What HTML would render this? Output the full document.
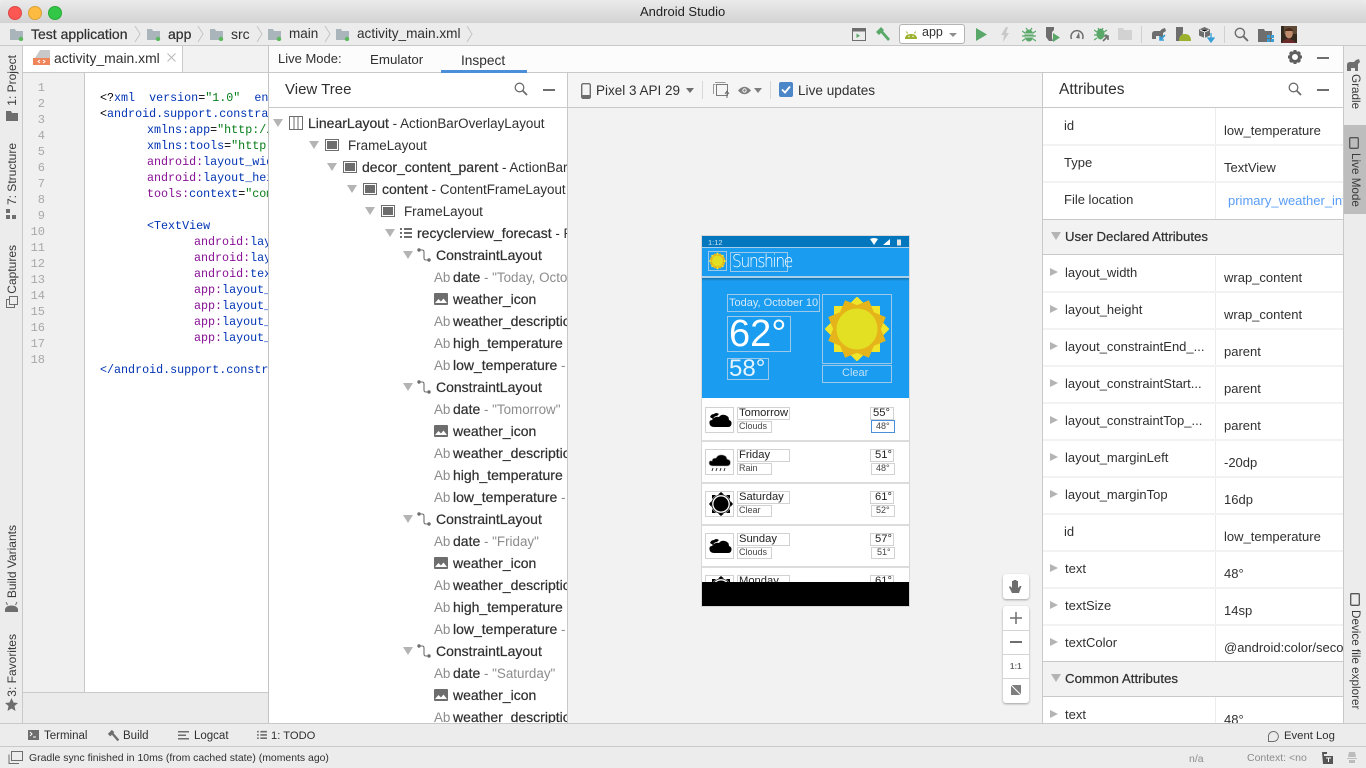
<!DOCTYPE html>
<html><head><meta charset="utf-8"><title>Android Studio</title>
<style>
html,body{margin:0;padding:0;width:1366px;height:768px;overflow:hidden;background:#ececec}
body{position:relative;font-family:"Liberation Sans",sans-serif;font-size:13px;color:#303030}
div,span,svg{position:absolute}
.t{position:absolute;white-space:nowrap;line-height:16px;margin-top:1px}
.t.ph{margin-top:0}
.t.m2{margin-top:2px}
.m{-webkit-text-stroke:.22px currentColor;font-size:14px}
.g{color:#8c8c8c}
.tree{font-size:13.4px}
.tree .t.m,.tree .t:has(.m){margin-top:0}
.ad{width:0;height:0;border-left:5px solid transparent;border-right:5px solid transparent;border-top:8px solid #b4b4b4}
.ar{width:0;height:0;border-top:4.5px solid transparent;border-bottom:4.5px solid transparent;border-left:8px solid #b4b4b4}
.vl{writing-mode:vertical-rl;transform:rotate(180deg);white-space:nowrap;font-size:12px;line-height:16px;color:#3a3a3a}
.vr{writing-mode:vertical-rl;white-space:nowrap;font-size:11.7px;line-height:16px;color:#3a3a3a}
.code{font-family:"Liberation Mono",monospace;font-size:11.7px;white-space:pre;position:absolute;line-height:16px;color:#000;margin-top:1px}
.n{font-family:"Liberation Mono",monospace;font-size:12px;color:#a8a8a8;position:absolute;left:24px;width:21px;text-align:right;line-height:16px;margin-top:1px}
.b{color:#0033b3}.gr{color:#067d17}.p{color:#871094}
.hl{position:absolute;background:#c9c9c9;height:1px}
.vlg{position:absolute;background:#c9c9c9;width:1px}
.gap{position:absolute;left:1043px;width:300px;height:2px;background:#f2f2f2}
.box{position:absolute;box-sizing:border-box;border:1px solid #d2d2d2;overflow:visible}
.hb{position:absolute;box-sizing:border-box;border:1px solid #9cc9ea}
.tip{font-size:11.2px;line-height:12px;color:#222;position:absolute;white-space:nowrap}
.tis{font-size:9px;line-height:11px;color:#444;position:absolute;white-space:nowrap}
.zb{position:absolute;left:1003px;width:26px;background:#fff;border-radius:3px;box-shadow:0 1px 2px rgba(0,0,0,.35)}
</style></head><body>
<svg width="0" height="0" style="position:absolute"><defs>
<symbol id="fold" viewBox="0 0 14 13"><path d="M0 1h5l1 2h7v9H0z" fill="#a9b4bb"/><circle cx="11" cy="11" r="2.2" fill="#5cb85c"/></symbol>
<symbol id="fr" viewBox="0 0 14 12"><rect x=".5" y=".5" width="13" height="11" fill="none" stroke="#6d6d6d"/><rect x="2" y="2" width="10" height="8" fill="#6d6d6d"/></symbol>
<symbol id="li" viewBox="0 0 14 14"><rect x=".5" y=".5" width="13" height="13" fill="none" stroke="#6d6d6d"/><path d="M5 0v14M9 0v14" stroke="#6d6d6d"/></symbol>
<symbol id="lst" viewBox="0 0 12 11"><path d="M0 1h2v2H0zM0 5h2v2H0zM0 9h2v2H0zM4 1h8v2H4zM4 5h8v2H4zM4 9h8v2H4z" fill="#6d6d6d"/></symbol>
<symbol id="con" viewBox="0 0 14 14"><circle cx="2" cy="2" r="1.7" fill="#6d6d6d"/><circle cx="12" cy="12" r="1.7" fill="#6d6d6d"/><path d="M3 2h2q2 0 2 2v6q0 2 2 2h2" fill="none" stroke="#6d6d6d" stroke-width="1.1"/></symbol>
<symbol id="img" viewBox="0 0 14 12"><rect width="14" height="12" rx="1" fill="#6d6d6d"/><path d="M1 10l3.5-4 2.5 2.5 2.5-3 3.500 4.500z" fill="#fff"/></symbol>
<symbol id="sr" viewBox="0 0 14 14"><circle cx="5.500" cy="5.500" r="4.300" fill="none" stroke="#6d6d6d" stroke-width="1.300"/><path d="M8.800 8.800l4.200 4.200" stroke="#6d6d6d" stroke-width="1.800"/></symbol>
<symbol id="sun" viewBox="-32 -32 64 64"><g fill="#efe52a"><rect x="-23" y="-23" width="46" height="46"/><rect x="-23" y="-23" width="46" height="46" transform="rotate(45)"/></g><g fill="#e5b41a"><rect x="-22" y="-22" width="44" height="44" transform="rotate(22.500)"/><rect x="-22" y="-22" width="44" height="44" transform="rotate(67.500)"/></g><circle r="20.500" fill="#e3e024"/></symbol>
<symbol id="cloud" viewBox="0 0 26 24"><path d="M5 12q3-4 7-3 2-3 6-2 4 1 4 5 3 1 2.500 4t-3.500 3H7q-4 0-4.500-3.500T5 12z" fill="#000"/><path d="M3 9q1-3 4-3 2-2 5 0l-2 2q-3 0-4 3z" fill="#000"/></symbol>
<symbol id="rain" viewBox="0 0 26 24"><path d="M5 11q0-3 4-3 2-4 7-3 4 1 4 4 4 1 3.500 4t-3.500 3H6q-4 0-4-3t3-2z" fill="#000" stroke="#bbb" stroke-width=".6"/><path d="M6 18l-1 3M10 18l-1 3M14 18l-1 3M18 18l-1 3" stroke="#333" stroke-width="1"/></symbol>
<symbol id="csun" viewBox="-13 -12 26 24"><circle r="7.500" fill="#000"/><circle r="9.200" fill="none" stroke="#000" stroke-width=".7"/><path d="M-3-9.500L0-12 3-9.500zM-3 9.500L0 12 3 9.500zM-9.500-3L-12 0-9.500 3zM9.500-3L12 0 9.500 3zM-9-5L-9-9-5-9zM9-5L9-9 5-9zM-9 5L-9 9-5 9zM9 5L9 9 5 9z" fill="#000"/></symbol>
<symbol id="ham" viewBox="0 0 16 16"><path d="M1 6L6 1l3 3-1 1 7 8-2 2-7-8-2 2z" fill="currentColor"/></symbol>
</defs></svg>

<!-- title bar -->
<div style="left:0;top:0;width:1366px;height:23px;background:linear-gradient(#ebebeb,#d2d2d2);border-radius:5px 5px 0 0"></div>
<div style="left:8px;top:6px;width:12px;height:12px;border-radius:50%;background:#fc5753;border:.5px solid #df4744"></div>
<div style="left:28px;top:6px;width:12px;height:12px;border-radius:50%;background:#fdbc40;border:.5px solid #de9f34"></div>
<div style="left:48px;top:6px;width:12px;height:12px;border-radius:50%;background:#33c748;border:.5px solid #27aa35"></div>
<span class="t ph" style="left:640px;top:4px;color:#222">Android Studio</span>

<!-- breadcrumb toolbar -->
<div class="hl" style="left:0;top:45px;width:1366px"></div>
<svg style="left:10px;top:28px" width="14" height="13"><use href="#fold"/></svg>
<span class="t m" style="left:31px;top:25px">Test application</span>
<svg style="left:134px;top:25px" width="8" height="18"><path d="M1 1l5 8-5 8" fill="none" stroke="#c4c4c4"/></svg>
<svg style="left:147px;top:28px" width="14" height="13"><use href="#fold"/></svg>
<span class="t m" style="left:168px;top:25px">app</span>
<svg style="left:197px;top:25px" width="8" height="18"><path d="M1 1l5 8-5 8" fill="none" stroke="#c4c4c4"/></svg>
<svg style="left:210px;top:28px" width="14" height="13"><use href="#fold"/></svg>
<span class="t" style="left:231px;top:25px;font-size:14px">src</span>
<svg style="left:256px;top:25px" width="8" height="18"><path d="M1 1l5 8-5 8" fill="none" stroke="#c4c4c4"/></svg>
<svg style="left:268px;top:28px" width="14" height="13"><use href="#fold"/></svg>
<span class="t" style="left:289px;top:25px;font-size:13.500px">main</span>
<svg style="left:324px;top:25px" width="8" height="18"><path d="M1 1l5 8-5 8" fill="none" stroke="#c4c4c4"/></svg>
<svg style="left:336px;top:28px" width="14" height="13"><use href="#fold"/></svg>
<span class="t" style="left:357px;top:25px;font-size:13.600px">activity_main.xml</span>
<svg style="left:466px;top:25px" width="8" height="18"><path d="M1 1l5 8-5 8" fill="none" stroke="#c4c4c4"/></svg>

<!-- top right toolbar icons -->
<svg style="left:852px;top:28px" width="14" height="13"><rect x=".5" y=".5" width="13" height="12" fill="none" stroke="#6e6e6e"/><rect x="1" y="1" width="12" height="2.500" fill="#6e6e6e"/><path d="M4.500 5.500v4.500l3.500-2.200z" fill="#59a869"/></svg>
<svg style="left:875px;top:26px;color:#59a869" width="16" height="16"><use href="#ham"/></svg>
<div style="left:899px;top:24px;width:66px;height:20px;box-sizing:border-box;background:#fff;border:1px solid #b4b4b4;border-radius:3px"></div>
<svg style="left:905px;top:29px" width="12" height="10"><path d="M0 10q0-5 6-5t6 5z" fill="#9bb02c"/><path d="M2.500 4.500L1.500 2.500M9.500 4.500l1-2" stroke="#9bb02c"/><circle cx="4" cy="7.500" r=".7" fill="#fff"/><circle cx="8" cy="7.500" r=".7" fill="#fff"/></svg>
<span class="t ph" style="left:922px;top:24px;font-size:12.500px">app</span>
<div style="left:949px;top:33px;width:0;height:0;border-left:4px solid transparent;border-right:4px solid transparent;border-top:4px solid #8e8e8e"></div>
<svg style="left:976px;top:28px" width="12" height="13"><path d="M0 0l11 6.500L0 13z" fill="#59a869"/></svg>
<svg style="left:1000px;top:27px" width="10" height="15"><path d="M6 0L1 8h3l-1 7 6-9H6l2-6z" fill="#c8c8c8"/></svg>
<svg style="left:1022px;top:27px" width="14" height="15"><ellipse cx="7" cy="8.500" rx="4.500" ry="6" fill="#59a869"/><path d="M0 4l3 2M14 4l-3 2M0 9h3M14 9h-3M0 14l3-2M14 14l-3-2M4 1l1.500 2M10 1L8.500 3" stroke="#59a869" stroke-width="1.200"/><path d="M3 7h8M3 10h8" stroke="#ececec"/></svg>
<svg style="left:1046px;top:27px" width="15" height="16"><path d="M0 0h8v3l-2 2v6l1 3H3L0 10z" fill="#6e6e6e"/><path d="M7 6l7 4.500-7 4.500z" fill="#59a869"/></svg>
<svg style="left:1070px;top:28px" width="14" height="12"><path d="M1.500 11a6 6 0 1 1 11 0" fill="none" stroke="#6e6e6e" stroke-width="1.500"/><path d="M6 10l3-6 .8 6.500z" fill="#6e6e6e"/></svg>
<svg style="left:1094px;top:27px" width="16" height="15"><ellipse cx="6.500" cy="7" rx="4" ry="5.500" fill="#59a869"/><path d="M0 3l3 2M13 3l-3 2M0 8h3M13 8h-2M0 13l3-2M4 1l1 2M9 1L8 3" stroke="#59a869" stroke-width="1.200"/><path d="M9 14l5-5M10 9h4v4" fill="none" stroke="#6e6e6e" stroke-width="1.600"/></svg>
<svg style="left:1118px;top:28px" width="14" height="12"><path d="M0 0h5l1 2h8v10H0z" fill="#d2d2d2"/></svg>
<div style="left:1141px;top:26px;width:1px;height:17px;background:#d0d0d0"></div>
<svg style="left:1152px;top:26px" width="15" height="16"><path d="M0 13V8q0-3 3-3h5l2-2 3-1 1 3-3 2v6H8v-3H4v3z" fill="#6e6e6e"/><path d="M8 15l5-5M9 10h4v4" fill="none" stroke="#389fd6" stroke-width="1.600" transform="rotate(180 10.500 12)"/></svg>
<svg style="left:1176px;top:27px" width="15" height="15"><path d="M0 0h7v4L6 14H0z" fill="#6e6e6e"/><path d="M3 14q0-7 6-7t6 7z" fill="#9bb02c"/></svg>
<svg style="left:1199px;top:27px" width="16" height="16"><path d="M5.500 0L11 2.500v6L5.500 11 0 8.500v-6z" fill="#6e6e6e"/><path d="M1 3l4.500 2L10 3M5.500 5v6" stroke="#ececec"/><path d="M12 6v8M9 11l3 4 3-4z" stroke="#389fd6" fill="#389fd6" stroke-width="1.300"/></svg>
<div style="left:1224px;top:26px;width:1px;height:17px;background:#d0d0d0"></div>
<svg style="left:1234px;top:27px" width="15" height="15"><use href="#sr"/></svg>
<svg style="left:1258px;top:29px" width="16" height="13"><path d="M0 0h6l1 2h7v11H0z" fill="#6e6e6e"/><rect x="9" y="6" width="3" height="3" fill="#389fd6"/><rect x="13" y="6" width="3" height="3" fill="#389fd6"/><rect x="9" y="10" width="3" height="3" fill="#389fd6"/><rect x="13" y="10" width="3" height="3" fill="#389fd6"/></svg>
<svg style="left:1281px;top:26px" width="16" height="17"><rect width="16" height="17" fill="#33291f"/><rect x="3" y="0" width="13" height="8" fill="#5e4836"/><ellipse cx="8" cy="7.500" rx="3.800" ry="5" fill="#c08a6c"/><path d="M4 4q4-4 8 0v1H4z" fill="#4a2a1a"/><path d="M1 17q2-5 7-4t7 4z" fill="#6b2a2a"/></svg>

<!-- left strip -->
<div class="vlg" style="left:22px;top:46px;height:677px"></div>
<span class="vl" style="left:4px;top:55px">1: Project</span>
<svg style="left:6px;top:111px" width="12" height="10"><path d="M0 0h5l1 2h6v8H0z" fill="#6e6e6e"/></svg>
<span class="vl" style="left:4px;top:143px">7: Structure</span>
<svg style="left:6px;top:209px" width="12" height="12"><path d="M0 0h4v4H0zM0 6h4v4H0zM6 6h4v4H6z" fill="#6e6e6e"/></svg>
<span class="vl" style="left:4px;top:245px">Captures</span>
<svg style="left:6px;top:296px" width="12" height="12"><rect x=".5" y="3.500" width="8" height="8" fill="none" stroke="#6e6e6e"/><rect x="3.500" y=".5" width="8" height="8" fill="#ececec" stroke="#6e6e6e"/></svg>
<span class="vl" style="left:4px;top:525px">Build Variants</span>
<svg style="left:5px;top:602px" width="13" height="10"><path d="M0 10q0-6 6.500-6T13 10zM2.500 3L1 0M10.500 3L12 0" fill="#6e6e6e" stroke="#6e6e6e"/></svg>
<span class="vl" style="left:4px;top:634px">3: Favorites</span>
<svg style="left:5px;top:698px" width="13" height="13"><path d="M6.500 0l2 4.500 4.500.5-3.500 3 1 5-4-2.500-4 2.500 1-5L0 5l4.500-.5z" fill="#6e6e6e"/></svg>

<!-- editor -->
<div style="left:23px;top:46px;width:245px;height:26px;background:#f2f2f2"></div>
<div style="left:23px;top:46px;width:159px;height:26px;background:#fff"></div>
<div class="vlg" style="left:182px;top:46px;height:26px"></div>
<div class="hl" style="left:23px;top:72px;width:245px"></div>
<svg style="left:33px;top:50px" width="18" height="15"><path d="M7 0h10v8H2z" fill="#c8c8c8"/><rect y="8" width="17" height="7" fill="#f0855a"/><path d="M7 10l-2 1.500L7 13M10 10l2 1.500L10 13" fill="none" stroke="#fff"/></svg>
<span class="t ph" style="left:54px;top:50px;font-size:13.900px">activity_main.xml</span>
<svg style="left:167px;top:53px" width="9" height="9"><path d="M.5.5l8 8M8.500.5l-8 8" stroke="#b8b8b8"/></svg>
<div style="left:23px;top:73px;width:61px;height:619px;background:#f0f0f0"></div>
<div class="vlg" style="left:84px;top:73px;height:619px"></div>
<div style="left:85px;top:73px;width:183px;height:619px;background:#fff"></div>
<div style="left:23px;top:692px;width:245px;height:1px;background:#c9c9c9"></div>
<div style="left:23px;top:693px;width:245px;height:30px;background:#ebebeb"></div>
<span class="n" style="top:79px">1</span><span class="n" style="top:95px">2</span><span class="n" style="top:111px">3</span><span class="n" style="top:127px">4</span><span class="n" style="top:143px">5</span><span class="n" style="top:159px">6</span><span class="n" style="top:175px">7</span><span class="n" style="top:191px">8</span><span class="n" style="top:207px">9</span><span class="n" style="top:223px">10</span><span class="n" style="top:239px">11</span><span class="n" style="top:255px">12</span><span class="n" style="top:271px">13</span><span class="n" style="top:287px">14</span><span class="n" style="top:303px">15</span><span class="n" style="top:319px">16</span><span class="n" style="top:335px">17</span><span class="n" style="top:351px">18</span>
<span class="code" style="left:100px;top:89px">&lt;?<span class="b" style="position:static">xml  version</span>=<span class="gr" style="position:static">"1.0"</span>  <span class="b" style="position:static">encoding</span></span>
<span class="code" style="left:100px;top:105px">&lt;<span class="b" style="position:static">android.support.constraint</span></span>
<span class="code" style="left:147px;top:121px"><span class="b" style="position:static">xmlns:app</span>=<span class="gr" style="position:static">"http://schemas</span></span>
<span class="code" style="left:147px;top:137px"><span class="b" style="position:static">xmlns:tools</span>=<span class="gr" style="position:static">"http://schemas</span></span>
<span class="code" style="left:147px;top:153px"><span class="p" style="position:static">android:</span><span class="b" style="position:static">layout_width</span></span>
<span class="code" style="left:147px;top:169px"><span class="p" style="position:static">android:</span><span class="b" style="position:static">layout_height</span></span>
<span class="code" style="left:147px;top:185px"><span class="p" style="position:static">tools:</span><span class="b" style="position:static">context</span>=<span class="gr" style="position:static">"com.example</span></span>
<span class="code b" style="left:147px;top:217px">&lt;TextView</span>
<span class="code" style="left:194px;top:233px"><span class="p" style="position:static">android:</span><span class="b" style="position:static">layout_width</span></span>
<span class="code" style="left:194px;top:249px"><span class="p" style="position:static">android:</span><span class="b" style="position:static">layout_height</span></span>
<span class="code" style="left:194px;top:265px"><span class="p" style="position:static">android:</span><span class="b" style="position:static">text</span></span>
<span class="code" style="left:194px;top:281px"><span class="p" style="position:static">app:</span><span class="b" style="position:static">layout_constraint</span></span>
<span class="code" style="left:194px;top:297px"><span class="p" style="position:static">app:</span><span class="b" style="position:static">layout_constraint</span></span>
<span class="code" style="left:194px;top:313px"><span class="p" style="position:static">app:</span><span class="b" style="position:static">layout_constraint</span></span>
<span class="code" style="left:194px;top:329px"><span class="p" style="position:static">app:</span><span class="b" style="position:static">layout_constraint</span></span>
<span class="code b" style="left:100px;top:361px">&lt;/android.support.constraint</span>

<!-- live mode panel -->
<div style="left:268px;top:46px;width:1075px;height:677px;background:#f2f2f2;border-left:1px solid #c4c4c4;box-sizing:border-box"></div>
<div style="left:269px;top:46px;width:1074px;height:26px;background:#fcfcfc"></div>
<div class="hl" style="left:269px;top:72px;width:1074px"></div>
<span class="t ph" style="left:278px;top:51px">Live Mode:</span>
<span class="t ph" style="left:370px;top:52px;font-size:13.300px">Emulator</span>
<span class="t ph" style="left:461px;top:53px;font-size:13.700px">Inspect</span>
<div style="left:441px;top:70px;width:86px;height:3px;background:#4a90d9"></div>
<svg style="left:1288px;top:50px" width="14" height="14" viewBox="-7 -7 14 14"><circle r="4.500" fill="none" stroke="#5f5f5f" stroke-width="3"/><path d="M-1.500-7h3v3h-3zM-1.500 4h3v3h-3zM-7-1.500h3v3h-3zM4-1.500h3v3H4z" fill="#5f5f5f" /><g transform="rotate(45)"><path d="M-1.500-7h3v3h-3zM-1.500 4h3v3h-3zM-7-1.500h3v3h-3zM4-1.500h3v3H4z" fill="#5f5f5f"/></g></svg>
<div style="left:1317px;top:57px;width:12px;height:1.500px;background:#6e6e6e"></div>

<!-- view tree -->
<div style="left:269px;top:73px;width:298px;height:650px;background:#fff"></div>
<div class="hl" style="left:269px;top:107px;width:298px"></div>
<div class="vlg" style="left:567px;top:73px;height:650px"></div>
<span class="t m2" style="left:285px;top:80px;font-size:15px">View Tree</span>
<svg style="left:514px;top:82px" width="14" height="14"><use href="#sr"/></svg>
<div style="left:543px;top:89px;width:12px;height:1.500px;background:#6e6e6e"></div>
<div class="tree" style="left:0;top:108px;width:567px;height:615px;overflow:hidden;clip-path:inset(0 0 0 269px)">
<div class="ad" style="left:273px;top:11px"></div><svg style="left:289px;top:8px" width="14" height="14"><use href="#li"/></svg><span class="t" style="left:308px;top:7px"><span class="m" style="position:static">LinearLayout</span> - ActionBarOverlayLayout</span>
<div class="ad" style="left:309px;top:33px"></div><svg style="left:325px;top:31px" width="14" height="12"><use href="#fr"/></svg><span class="t" style="left:348px;top:29px">FrameLayout</span>
<div class="ad" style="left:327px;top:55px"></div><svg style="left:343px;top:53px" width="14" height="12"><use href="#fr"/></svg><span class="t" style="left:362px;top:51px"><span class="m" style="position:static">decor_content_parent</span> - ActionBarOverlay</span>
<div class="ad" style="left:347px;top:77px"></div><svg style="left:363px;top:75px" width="14" height="12"><use href="#fr"/></svg><span class="t" style="left:382px;top:73px"><span class="m" style="position:static">content</span> - ContentFrameLayout</span>
<div class="ad" style="left:365px;top:99px"></div><svg style="left:381px;top:97px" width="14" height="12"><use href="#fr"/></svg><span class="t" style="left:404px;top:95px">FrameLayout</span>
<div class="ad" style="left:385px;top:121px"></div><svg style="left:400px;top:119px" width="12" height="11"><use href="#lst"/></svg><span class="t" style="left:417px;top:117px"><span class="m" style="position:static">recyclerview_forecast</span> - RecyclerView</span>

<div class="ad" style="left:403px;top:143px"></div><svg style="left:417px;top:140px" width="14" height="14"><use href="#con"/></svg><span class="t m" style="left:436px;top:139px">ConstraintLayout</span>
<span class="t g" style="left:434px;top:161px">Ab</span><span class="t" style="left:453px;top:161px"><span class="m" style="position:static">date</span> <span class="g" style="position:static">- "Today, October</span></span>
<svg style="left:434px;top:185px" width="14" height="12"><use href="#img"/></svg><span class="t m" style="left:453px;top:183px">weather_icon</span>
<span class="t g" style="left:434px;top:205px">Ab</span><span class="t m" style="left:453px;top:205px">weather_description</span>
<span class="t g" style="left:434px;top:227px">Ab</span><span class="t m" style="left:453px;top:227px">high_temperature</span>
<span class="t g" style="left:434px;top:249px">Ab</span><span class="t" style="left:453px;top:249px"><span class="m" style="position:static">low_temperature</span> <span class="g" style="position:static">- "58"</span></span>

<div class="ad" style="left:403px;top:275px"></div><svg style="left:417px;top:272px" width="14" height="14"><use href="#con"/></svg><span class="t m" style="left:436px;top:271px">ConstraintLayout</span>
<span class="t g" style="left:434px;top:293px">Ab</span><span class="t" style="left:453px;top:293px"><span class="m" style="position:static">date</span> <span class="g" style="position:static">- "Tomorrow"</span></span>
<svg style="left:434px;top:317px" width="14" height="12"><use href="#img"/></svg><span class="t m" style="left:453px;top:315px">weather_icon</span>
<span class="t g" style="left:434px;top:337px">Ab</span><span class="t m" style="left:453px;top:337px">weather_description</span>
<span class="t g" style="left:434px;top:359px">Ab</span><span class="t m" style="left:453px;top:359px">high_temperature</span>
<span class="t g" style="left:434px;top:381px">Ab</span><span class="t" style="left:453px;top:381px"><span class="m" style="position:static">low_temperature</span> <span class="g" style="position:static">- "48"</span></span>

<div class="ad" style="left:403px;top:407px"></div><svg style="left:417px;top:404px" width="14" height="14"><use href="#con"/></svg><span class="t m" style="left:436px;top:403px">ConstraintLayout</span>
<span class="t g" style="left:434px;top:425px">Ab</span><span class="t" style="left:453px;top:425px"><span class="m" style="position:static">date</span> <span class="g" style="position:static">- "Friday"</span></span>
<svg style="left:434px;top:449px" width="14" height="12"><use href="#img"/></svg><span class="t m" style="left:453px;top:447px">weather_icon</span>
<span class="t g" style="left:434px;top:469px">Ab</span><span class="t m" style="left:453px;top:469px">weather_description</span>
<span class="t g" style="left:434px;top:491px">Ab</span><span class="t m" style="left:453px;top:491px">high_temperature</span>
<span class="t g" style="left:434px;top:513px">Ab</span><span class="t" style="left:453px;top:513px"><span class="m" style="position:static">low_temperature</span> <span class="g" style="position:static">- "48"</span></span>

<div class="ad" style="left:403px;top:539px"></div><svg style="left:417px;top:536px" width="14" height="14"><use href="#con"/></svg><span class="t m" style="left:436px;top:535px">ConstraintLayout</span>
<span class="t g" style="left:434px;top:557px">Ab</span><span class="t" style="left:453px;top:557px"><span class="m" style="position:static">date</span> <span class="g" style="position:static">- "Saturday"</span></span>
<svg style="left:434px;top:581px" width="14" height="12"><use href="#img"/></svg><span class="t m" style="left:453px;top:579px">weather_icon</span>
<span class="t g" style="left:434px;top:601px">Ab</span><span class="t m" style="left:453px;top:601px">weather_description</span>
</div>

<!-- center toolbar -->
<div style="left:568px;top:73px;width:474px;height:34px;background:#f5f5f5"></div>
<div class="hl" style="left:568px;top:107px;width:474px"></div>
<svg style="left:581px;top:83px" width="10" height="16"><rect x=".7" y=".7" width="8.600" height="14.600" rx="1.500" fill="none" stroke="#6e6e6e" stroke-width="1.400"/><rect x="1" y="12" width="8" height="3" fill="#6e6e6e"/></svg>
<span class="t" style="left:596px;top:82px;font-size:13.500px">Pixel 3 API 29</span>
<div style="left:686px;top:88px;width:0;height:0;border-left:4px solid transparent;border-right:4px solid transparent;border-top:5px solid #6e6e6e"></div>
<div style="left:702px;top:81px;width:1px;height:18px;background:#d8d8d8"></div>
<svg style="left:713px;top:82px" width="17" height="17"><path d="M.5 12V2.500h2M2.500 1V.5h10" fill="none" stroke="#9a9a9a"/><rect x="3.500" y="2.500" width="11" height="11" fill="none" stroke="#7a7a7a"/><path d="M14 9v7M12 12l2-3 2 3" fill="none" stroke="#6e6e6e"/></svg>
<svg style="left:738px;top:86px" width="13" height="9"><path d="M0 4.500Q6.500-3 13 4.500 6.500 12 0 4.500z" fill="#7e7e7e"/><circle cx="6.500" cy="4.500" r="2.200" fill="#f5f5f5"/><circle cx="6.500" cy="4.500" r="1.200" fill="#7e7e7e"/></svg>
<div style="left:754px;top:88px;width:0;height:0;border-left:4px solid transparent;border-right:4px solid transparent;border-top:5px solid #7e7e7e"></div>
<div style="left:770px;top:81px;width:1px;height:18px;background:#d8d8d8"></div>
<svg style="left:779px;top:82px" width="14" height="15"><rect width="14" height="15" rx="2" fill="#4a86c8"/><path d="M3 7.500l3 3 5-6" fill="none" stroke="#fff" stroke-width="1.800"/></svg>
<span class="t" style="left:798px;top:82px;font-size:13.600px">Live updates</span>

<!-- phone -->
<div style="left:701px;top:235px;width:209px;height:372px;box-sizing:border-box;border:1px solid #d8d8d8;background:#fff"></div>
<div style="left:702px;top:236px;width:207px;height:11px;background:#0277bd"></div>
<span class="t ph" style="left:708px;top:238px;font-size:7.500px;line-height:9px;color:#cfe3f2">1:12</span>
<svg style="left:870px;top:238px" width="34" height="8"><path d="M0 1q4-2 8 0L4 7z" fill="#fff"/><path d="M13 7l7-6v6z" fill="#fff"/><rect x="27" y="1.500" width="4" height="6" fill="#e6e6e6"/></svg>
<div style="left:702px;top:247px;width:207px;height:151px;background:#1a9cf0"></div>
<div style="left:702px;top:247px;width:207px;height:1px;background:#a8d0ea"></div>
<div style="left:702px;top:276px;width:207px;height:1.500px;background:#a8d0ea"></div>
<div style="left:702px;top:277.500px;width:207px;height:3px;background:linear-gradient(#1673ad,#1a9cf0)"></div>
<div class="hb" style="left:708px;top:251px;width:19px;height:20px"></div>
<svg style="left:709px;top:252px" width="17" height="18"><use href="#sun"/></svg>
<div class="hb" style="left:730px;top:252px;width:58px;height:20px"></div>
<span class="t ph" style="left:732px;top:253px;font-size:18px;line-height:18px;color:#fff;font-family:'DejaVu Sans',sans-serif;font-weight:200;letter-spacing:-1.600px;transform-origin:0 0;transform:scaleX(.86)">Sunshine</span>
<div class="hb" style="left:727px;top:294px;width:93px;height:18px"></div>
<span class="t ph" style="left:729px;top:295px;font-size:11px;color:#d2eafa">Today, October 10</span>
<div class="hb" style="left:727px;top:316px;width:64px;height:36px"></div>
<span class="t ph" style="left:729px;top:315px;font-size:38px;line-height:38px;color:#fff">62°</span>
<div class="hb" style="left:727px;top:358px;width:42px;height:22px"></div>
<span class="t ph" style="left:729px;top:358px;font-size:24px;line-height:22px;color:#e4f3fd">58°</span>
<div class="hb" style="left:822px;top:294px;width:70px;height:70px"></div>
<svg style="left:824px;top:296px" width="66" height="66" viewBox="-33 -33 66 66"><use href="#sun" x="-32" y="-32" width="64" height="64"/></svg>
<div class="hb" style="left:822px;top:365px;width:70px;height:18px"></div>
<span class="t ph" style="left:842px;top:365px;font-size:11px;color:#bfe0f7">Clear</span>
<div style="left:702px;top:398px;width:207px;height:1px;background:#fff"></div>

<div style="left:702px;top:440px;width:207px;height:2px;background:#dcdcdc"></div>
<div style="left:702px;top:482px;width:207px;height:2px;background:#dcdcdc"></div>
<div style="left:702px;top:524px;width:207px;height:2px;background:#dcdcdc"></div>
<div style="left:702px;top:566px;width:207px;height:2px;background:#dcdcdc"></div>

<div class="box" style="left:705px;top:407px;width:29px;height:26px"></div><svg style="left:707px;top:408px" width="26" height="24"><use href="#cloud"/></svg>
<div class="box" style="left:737px;top:407px;width:53px;height:13px"></div><span class="tip" style="left:739px;top:407px">Tomorrow</span>
<div class="box" style="left:737px;top:421px;width:35px;height:12px"></div><span class="tis" style="left:739px;top:421px">Clouds</span>
<div class="box" style="left:870px;top:407px;width:24px;height:13px"></div><span class="tip" style="left:873px;top:407px">55°</span>
<div class="box" style="left:871px;top:420px;width:24px;height:13px;border-color:#4a90d9;background:#fff"></div><span class="tis" style="left:876px;top:421px">48°</span>

<div class="box" style="left:705px;top:449px;width:29px;height:26px"></div><svg style="left:707px;top:450px" width="26" height="24"><use href="#rain"/></svg>
<div class="box" style="left:737px;top:449px;width:53px;height:13px"></div><span class="tip" style="left:739px;top:449px">Friday</span>
<div class="box" style="left:737px;top:463px;width:35px;height:12px"></div><span class="tis" style="left:739px;top:463px">Rain</span>
<div class="box" style="left:870px;top:449px;width:24px;height:13px"></div><span class="tip" style="left:875px;top:449px">51°</span>
<div class="box" style="left:871px;top:463px;width:24px;height:12px"></div><span class="tis" style="left:876px;top:463px">48°</span>

<div class="box" style="left:705px;top:491px;width:29px;height:26px"></div><svg style="left:708px;top:492px" width="26" height="24"><use href="#csun"/></svg>
<div class="box" style="left:737px;top:491px;width:53px;height:13px"></div><span class="tip" style="left:739px;top:491px">Saturday</span>
<div class="box" style="left:737px;top:505px;width:35px;height:12px"></div><span class="tis" style="left:739px;top:505px">Clear</span>
<div class="box" style="left:870px;top:491px;width:24px;height:13px"></div><span class="tip" style="left:875px;top:491px">61°</span>
<div class="box" style="left:871px;top:505px;width:24px;height:12px"></div><span class="tis" style="left:876px;top:505px">52°</span>

<div class="box" style="left:705px;top:533px;width:29px;height:26px"></div><svg style="left:707px;top:534px" width="26" height="24"><use href="#cloud"/></svg>
<div class="box" style="left:737px;top:533px;width:53px;height:13px"></div><span class="tip" style="left:739px;top:533px">Sunday</span>
<div class="box" style="left:737px;top:547px;width:35px;height:12px"></div><span class="tis" style="left:739px;top:547px">Clouds</span>
<div class="box" style="left:870px;top:533px;width:24px;height:13px"></div><span class="tip" style="left:875px;top:533px">57°</span>
<div class="box" style="left:871px;top:547px;width:24px;height:12px"></div><span class="tis" style="left:877px;top:547px">51°</span>

<div class="box" style="left:705px;top:575px;width:29px;height:26px"></div><svg style="left:708px;top:576px" width="26" height="24"><use href="#csun"/></svg>
<div class="box" style="left:737px;top:575px;width:53px;height:13px"></div><span class="tip" style="left:739px;top:575px">Monday</span>
<div class="box" style="left:870px;top:575px;width:24px;height:13px"></div><span class="tip" style="left:875px;top:575px">61°</span>
<div style="left:702px;top:582px;width:207px;height:24px;background:#000"></div>

<!-- zoom controls -->
<div class="zb" style="top:574px;height:25px"></div>
<svg style="left:1009px;top:579px" width="14" height="15"><path d="M3 14L0 8l1-1 2 2V2h1.500v5V1H6v6V1h1.500v6V2H9v7l2-2h1.500L11 11l-1 3z" fill="#6e6e6e"/></svg>
<div class="zb" style="top:606px;height:97px"></div>
<div class="hl" style="left:1003px;top:630px;width:26px;background:#d4d4d4"></div>
<div class="hl" style="left:1003px;top:654px;width:26px;background:#d4d4d4"></div>
<div class="hl" style="left:1003px;top:678px;width:26px;background:#d4d4d4"></div>
<svg style="left:1010px;top:612px" width="12" height="12"><path d="M0 6h12M6 0v12" stroke="#6e6e6e" stroke-width="1.500"/></svg>
<div style="left:1010px;top:641px;width:12px;height:1.500px;background:#6e6e6e"></div>
<span class="t" style="left:1010px;top:658px;font-size:8px;font-weight:bold;color:#6e6e6e">1:1</span>
<svg style="left:1011px;top:685px" width="10" height="10"><rect width="10" height="10" fill="#7e7e7e"/><path d="M0 0l10 10" stroke="#fff"/></svg>

<!-- attributes -->
<div style="left:1043px;top:73px;width:300px;height:650px;background:#fff"></div>
<div class="vlg" style="left:1042px;top:73px;height:650px"></div>
<div class="hl" style="left:1043px;top:107px;width:300px"></div>
<span class="t m2" style="left:1059px;top:80px;font-size:15.500px">Attributes</span>
<svg style="left:1288px;top:82px" width="14" height="14"><use href="#sr"/></svg>
<div style="left:1317px;top:89px;width:12px;height:1.500px;background:#6e6e6e"></div>
<div style="left:1215px;top:108px;width:1px;height:111px;background:#ececec"></div>
<div style="left:1215px;top:256px;width:1px;height:405px;background:#ececec"></div>
<div style="left:1215px;top:697px;width:1px;height:26px;background:#ececec"></div>
<div class="gap" style="top:144px"></div><div class="gap" style="top:181px"></div>
<div class="hl" style="left:1043px;top:219px;width:300px"></div>
<div style="left:1043px;top:220px;width:300px;height:34px;background:#f2f2f2"></div>
<div class="hl" style="left:1043px;top:254px;width:300px"></div>
<div class="gap" style="top:291px"></div><div class="gap" style="top:328px"></div><div class="gap" style="top:365px"></div><div class="gap" style="top:402px"></div><div class="gap" style="top:439px"></div><div class="gap" style="top:476px"></div><div class="gap" style="top:513px"></div><div class="gap" style="top:550px"></div><div class="gap" style="top:587px"></div><div class="gap" style="top:624px"></div>
<div class="hl" style="left:1043px;top:661px;width:300px"></div>
<div style="left:1043px;top:662px;width:300px;height:34px;background:#f2f2f2"></div>
<div class="hl" style="left:1043px;top:696px;width:300px"></div>
<div style="left:0;top:0;width:1343px;height:723px;overflow:hidden;clip-path:inset(0 0 0 1043px)">
<span class="t" style="left:1064px;top:117px">id</span><span class="t" style="left:1224px;top:122px">low_temperature</span>
<span class="t" style="left:1064px;top:154px">Type</span><span class="t" style="left:1224px;top:159px">TextView</span>
<span class="t" style="left:1064px;top:191px">File location</span><span class="t" style="left:1228px;top:192px;color:#589df6">primary_weather_info.xml</span>
<div class="ad" style="left:1051px;top:232px"></div><span class="t m" style="left:1065px;top:228px;font-size:13.200px">User Declared Attributes</span>
<div class="ar" style="left:1050px;top:268px"></div><span class="t" style="left:1065px;top:264px">layout_width</span><span class="t" style="left:1224px;top:269px">wrap_content</span>
<div class="ar" style="left:1050px;top:305px"></div><span class="t" style="left:1065px;top:301px">layout_height</span><span class="t" style="left:1224px;top:306px">wrap_content</span>
<div class="ar" style="left:1050px;top:342px"></div><span class="t" style="left:1065px;top:338px">layout_constraintEnd_...</span><span class="t" style="left:1224px;top:343px">parent</span>
<div class="ar" style="left:1050px;top:379px"></div><span class="t" style="left:1065px;top:375px">layout_constraintStart...</span><span class="t" style="left:1224px;top:380px">parent</span>
<div class="ar" style="left:1050px;top:416px"></div><span class="t" style="left:1065px;top:412px">layout_constraintTop_...</span><span class="t" style="left:1224px;top:417px">parent</span>
<div class="ar" style="left:1050px;top:453px"></div><span class="t" style="left:1065px;top:449px">layout_marginLeft</span><span class="t" style="left:1224px;top:454px">-20dp</span>
<div class="ar" style="left:1050px;top:490px"></div><span class="t" style="left:1065px;top:486px">layout_marginTop</span><span class="t" style="left:1224px;top:491px">16dp</span>
<span class="t" style="left:1064px;top:523px">id</span><span class="t" style="left:1224px;top:528px">low_temperature</span>
<div class="ar" style="left:1050px;top:564px"></div><span class="t" style="left:1065px;top:560px">text</span><span class="t" style="left:1224px;top:565px">48°</span>
<div class="ar" style="left:1050px;top:601px"></div><span class="t" style="left:1065px;top:597px">textSize</span><span class="t" style="left:1224px;top:602px">14sp</span>
<div class="ar" style="left:1050px;top:638px"></div><span class="t" style="left:1065px;top:634px">textColor</span><span class="t" style="left:1224px;top:639px">@android:color/secondary</span>
<div class="ad" style="left:1051px;top:674px"></div><span class="t m" style="left:1065px;top:670px;font-size:13.300px">Common Attributes</span>
<div class="ar" style="left:1050px;top:710px"></div><span class="t" style="left:1065px;top:706px">text</span><span class="t" style="left:1224px;top:711px">48°</span>
</div>

<!-- right strip -->
<div class="vlg" style="left:1343px;top:46px;height:677px"></div>
<svg style="left:1347px;top:58px" width="14" height="13"><path d="M0 13V7q0-3 3-3h4l2-2 3-1 1 3-2 2v7H8v-3H4v3z" fill="#6e6e6e"/></svg>
<span class="vr" style="left:1347px;top:74px">Gradle</span>
<div style="left:1344px;top:125px;width:22px;height:89px;background:#bdbdbd"></div>
<svg style="left:1349px;top:137px" width="10" height="12"><rect x=".7" y=".7" width="8.600" height="10.600" rx="1" fill="none" stroke="#555" stroke-width="1.300"/></svg>
<span class="vr" style="left:1347px;top:153px">Live Mode</span>
<svg style="left:1350px;top:593px" width="10" height="13"><rect x=".7" y=".7" width="8.600" height="11.600" rx="1" fill="none" stroke="#555" stroke-width="1.300"/></svg>
<span class="vr" style="left:1347px;top:610px">Device file explorer</span>

<!-- bottom tool bar -->
<div class="hl" style="left:0;top:723px;width:1366px"></div>
<div class="hl" style="left:0;top:746px;width:1366px"></div>
<svg style="left:28px;top:730px" width="11" height="10"><rect width="11" height="10" fill="#6e6e6e"/><path d="M2 2l2 2-2 2M5 7h3" stroke="#fff" fill="none"/></svg>
<span class="t" style="left:44px;top:727px;font-size:11.500px">Terminal</span>
<svg style="left:107px;top:729px;color:#6e6e6e" width="13" height="13"><use href="#ham"/></svg>
<span class="t" style="left:123px;top:727px;font-size:11.500px">Build</span>
<svg style="left:178px;top:731px" width="11" height="9"><path d="M0 0h11v1.500H0zM0 3.500h8V5H0zM0 7h11v1.500H0z" fill="#6e6e6e"/></svg>
<span class="t" style="left:194px;top:727px;font-size:11.500px">Logcat</span>
<svg style="left:257px;top:730px" width="10" height="9"><use href="#lst"/></svg>
<span class="t" style="left:271px;top:727px;font-size:11.200px">1: TODO</span>
<svg style="left:1267px;top:729px" width="13" height="13"><path d="M1.500 12.500V6.500a5 5 0 1 1 5 6z" fill="none" stroke="#6e6e6e"/></svg>
<span class="t" style="left:1284px;top:727px;font-size:11.300px">Event Log</span>

<!-- status bar -->
<svg style="left:8px;top:751px" width="15" height="14"><rect x="3.500" y=".5" width="11" height="9" fill="none" stroke="#6e6e6e"/><path d="M1 3.500v9h10" fill="none" stroke="#6e6e6e"/></svg>
<span class="t m2" style="left:29px;top:749px;font-size:10.450px">Gradle sync finished in 10ms (from cached state) (moments ago)</span>
<span class="t g m2" style="left:1189px;top:749px;font-size:10.500px">n/a</span>
<div style="left:1240px;top:747px;width:80px;height:21px;overflow:hidden"><span class="t g" style="left:7px;top:2px;font-size:10.500px;line-height:16px">Context: &lt;no<br>context&gt;</span></div>
<svg style="left:1321px;top:752px" width="13" height="12"><path d="M1 0h5v2H3v2h9v8H2z" fill="#555"/><path d="M5 6h5M7.500 6v4" stroke="#fff"/></svg>
<svg style="left:1347px;top:752px" width="10" height="12"><path d="M2 0h6l1 5H1zM0 6h10v1H0zM2 8h6v3H2z" fill="#bcbcbc"/></svg>
</body></html>
